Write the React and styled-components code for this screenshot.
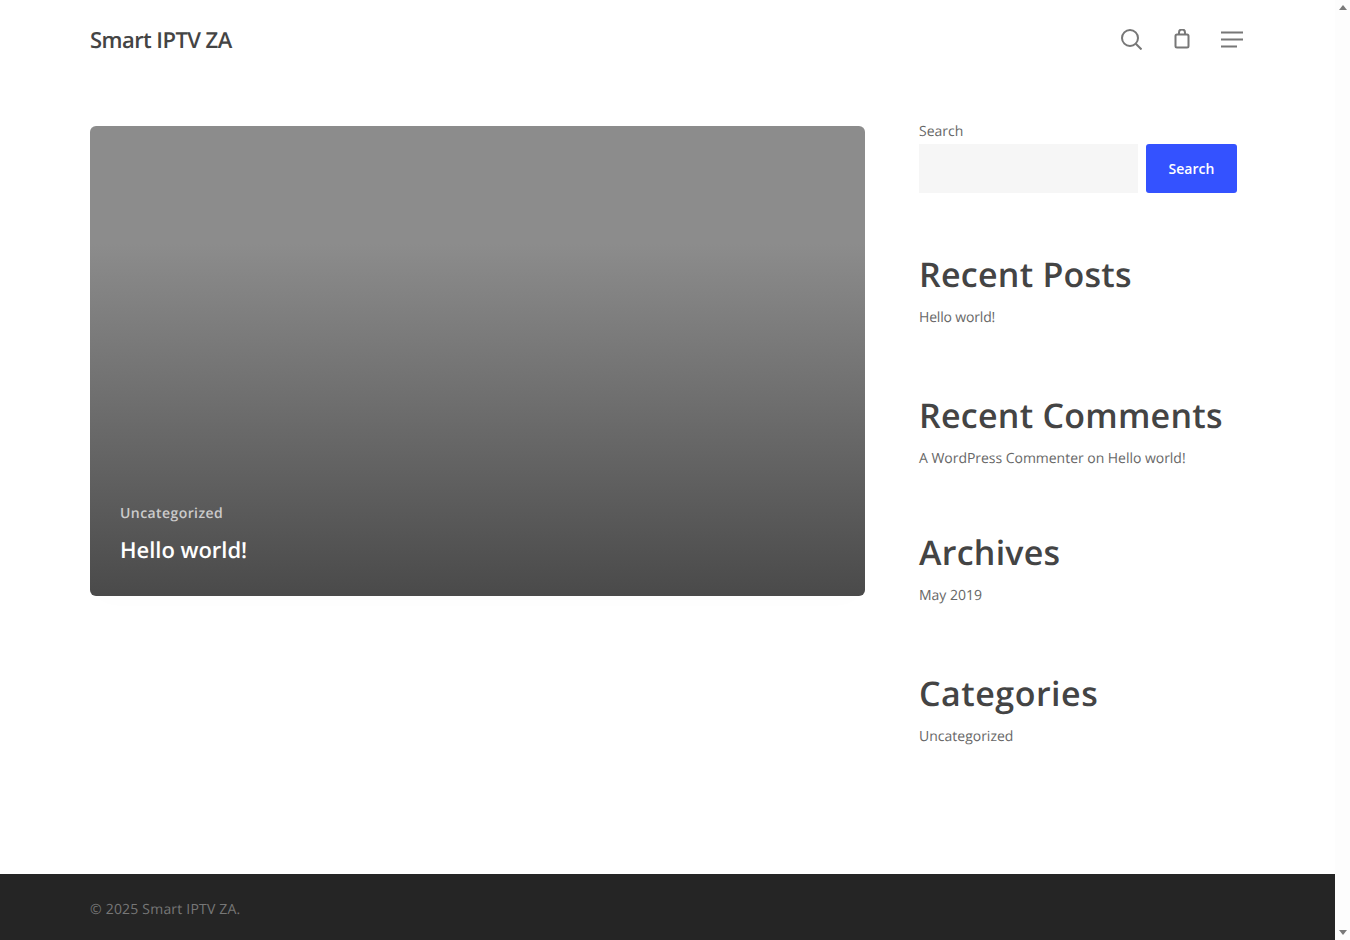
import React from "react";
import styled, { createGlobalStyle } from "styled-components";

const GlobalStyle = createGlobalStyle`
  html, body { margin: 0; padding: 0; background: #fff; overflow: hidden; }
  body {
    font-family: "Open Sans", "Liberation Sans", sans-serif;
    color: #676767;
    text-rendering: geometricPrecision;
  }
  * { box-sizing: border-box; }
`;

const Frame = styled.div`
  display: flex;
  width: 1350px;
  height: 940px;
  overflow: hidden;
`;
const Page = styled.div`
  width: 1335px;
  height: 940px;
  display: flex;
  flex-direction: column;
`;
const Scrollbar = styled.div`
  width: 15px;
  height: 940px;
  background: #fdfdfd;
  display: flex;
  flex-direction: column;
  justify-content: space-between;
  align-items: center;
  padding: 5px 0;
`;
const Arrow = styled.div`
  width: 0;
  height: 0;
  border-left: 4.5px solid transparent;
  border-right: 4.5px solid transparent;
  border-bottom: ${p => (p.$down ? "0" : "5px solid #7a7a7a")};
  border-top: ${p => (p.$down ? "5px solid #7a7a7a" : "0")};
`;

const Header = styled.header`
  height: 78px;
  padding: 2px 92px 0 90px;
  display: flex;
  align-items: center;
  justify-content: space-between;
`;
const Logo = styled.a`
  font-size: 22px;
  font-weight: 600;
  letter-spacing: -0.57px;
  color: #444;
`;
const Icons = styled.div`
  display: flex;
  align-items: center;
  margin-top: -2px;
`;
const IconBtn = styled.span`
  display: flex;
  width: ${p => p.$w}px;
  margin-left: ${p => p.$gap}px;
`;

const Main = styled.main`
  flex: 1;
  display: flex;
  padding: 48px 90px 0;
`;
const Content = styled.div`
  width: 775px;
  margin-right: 54px;
`;
const PostCard = styled.article`
  height: 470px;
  border-radius: 6px;
  background: linear-gradient(to bottom, #8c8c8c 0%, #8c8c8c 25%, #4a4a4a 100%);
  box-shadow: 0 10px 30px rgba(0, 0, 0, 0.008);
  padding: 377px 30px 0;
`;
const PostCat = styled.div`
  font-size: 14px;
  line-height: 22px;
  font-weight: 600;
  letter-spacing: 0.42px;
  color: rgba(255, 255, 255, 0.7);
`;
const PostTitle = styled.h2`
  margin: 10px 0 0;
  font-size: 22px;
  line-height: 30px;
  font-weight: 600;
  letter-spacing: -0.02px;
  color: #fff;
`;

const Sidebar = styled.aside`
  width: 325px;
  margin-top: -5px;
`;
const SearchLabel = styled.label`
  display: block;
  font-size: 14px;
  line-height: 22px;
  color: #676767;
`;
const SearchRow = styled.div`
  display: flex;
  gap: 8px;
  margin-top: 1px;
  margin-bottom: 59px;
`;
const SearchInput = styled.div`
  width: 219px;
  height: 49px;
  background: #f6f6f6;
`;
const SearchButton = styled.button`
  width: 91px;
  height: 49px;
  border: 0;
  border-radius: 3px;
  background: #3452ff;
  color: #fff;
  font-family: inherit;
  font-size: 14px;
  font-weight: 600;
`;
const Widget = styled.section`
  margin-bottom: ${p => p.$mb}px;
`;
const WidgetTitle = styled.h3`
  margin: 0;
  font-size: 34px;
  line-height: 44px;
  font-weight: 600;
  letter-spacing: ${p => p.$ls || 0.25}px;
  color: #444;
`;
const WidgetText = styled.div`
  margin-top: 11px;
  font-size: 14px;
  line-height: 22px;
  letter-spacing: ${p => p.$ls || 0}px;
  color: #676767;
`;

const Footer = styled.footer`
  height: 66px;
  background: #252525;
  padding: 25px 90px 0;
  font-size: 14px;
  line-height: 22px;
  letter-spacing: 0.2px;
  color: #777;
`;

const App = () => {
  return (
    <>
      <GlobalStyle />
      <Frame>
        <Page>
          <Header>
            <Logo>Smart IPTV ZA</Logo>
            <Icons>
              <IconBtn $w={21} $gap={0}>
                <svg width="21" height="21" viewBox="0 0 21 21" fill="none" stroke="#777" strokeWidth="2">
                  <circle cx="9" cy="9" r="8" />
                  <path d="M14.8 14.8L20.5 20.5" />
                </svg>
              </IconBtn>
              <IconBtn $w={16} $gap={32}>
                <svg width="16" height="20" viewBox="0 0 16 20" fill="none" stroke="#777" strokeWidth="2">
                  <rect x="1.5" y="5.5" width="13" height="13" rx="1.5" />
                  <path d="M5 5V3.5a3 3 0 0 1 6 0V5" />
                </svg>
              </IconBtn>
              <IconBtn $w={22} $gap={31}>
                <svg width="22" height="17" viewBox="0 0 22 17" stroke="#777" strokeWidth="2">
                  <path d="M0 1.5h22M0 8.5h22M0 15.5h16" />
                </svg>
              </IconBtn>
            </Icons>
          </Header>
          <Main>
            <Content>
              <PostCard>
                <PostCat>Uncategorized</PostCat>
                <PostTitle>Hello world!</PostTitle>
              </PostCard>
            </Content>
            <Sidebar>
              <SearchLabel>Search</SearchLabel>
              <SearchRow>
                <SearchInput />
                <SearchButton>Search</SearchButton>
              </SearchRow>
              <Widget $mb={64}>
                <WidgetTitle>Recent Posts</WidgetTitle>
                <WidgetText $ls={-0.17}>Hello world!</WidgetText>
              </Widget>
              <Widget $mb={60}>
                <WidgetTitle>Recent Comments</WidgetTitle>
                <WidgetText $ls={-0.03}>A WordPress Commenter on Hello world!</WidgetText>
              </Widget>
              <Widget $mb={64}>
                <WidgetTitle>Archives</WidgetTitle>
                <WidgetText>May 2019</WidgetText>
              </Widget>
              <Widget $mb={0}>
                <WidgetTitle $ls={0.5}>Categories</WidgetTitle>
                <WidgetText>Uncategorized</WidgetText>
              </Widget>
            </Sidebar>
          </Main>
          <Footer>© 2025 Smart IPTV ZA.</Footer>
        </Page>
        <Scrollbar>
          <Arrow />
          <Arrow $down />
        </Scrollbar>
      </Frame>
    </>
  );
};

export default App;
